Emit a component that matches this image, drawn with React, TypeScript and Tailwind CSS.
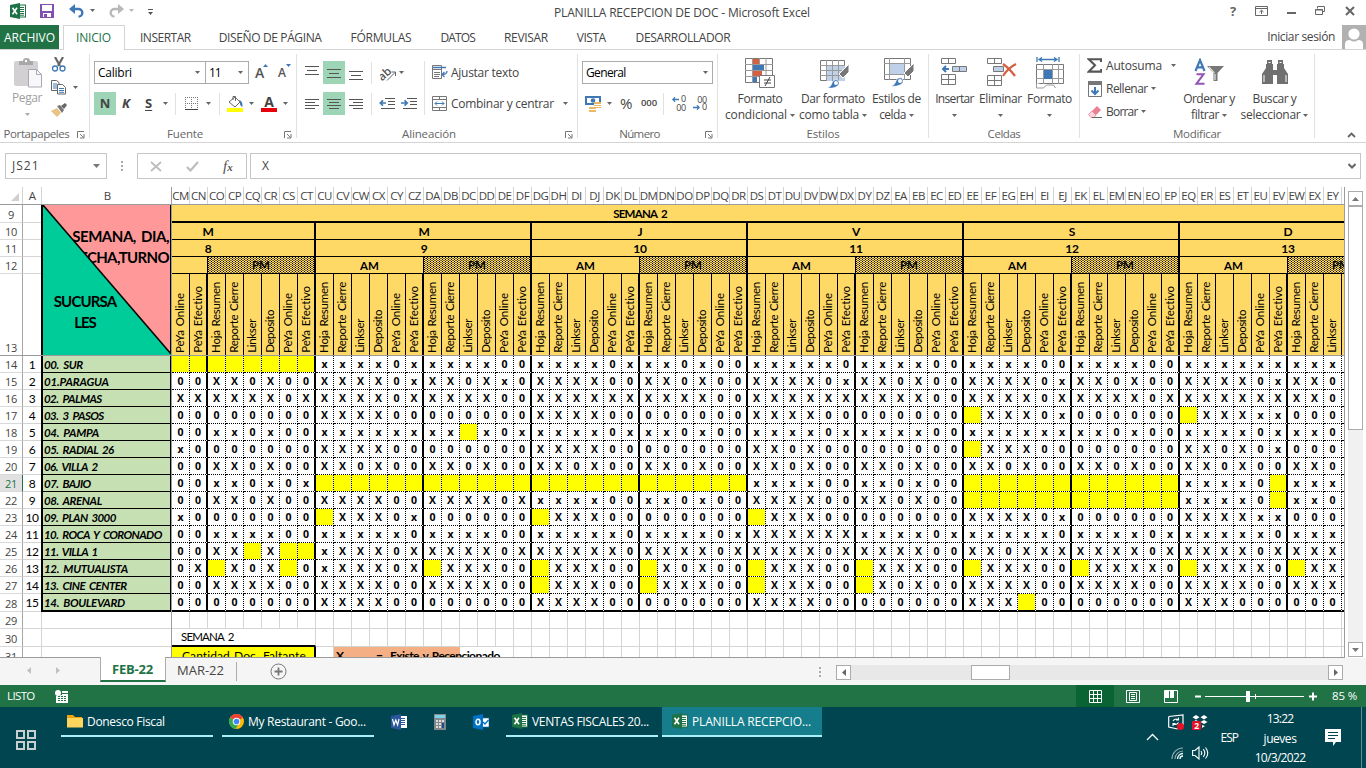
import React, { useLayoutEffect, useRef, useState } from "react";

const UI = "font-['Open_Sans','Noto_Sans',sans-serif]";
const CELL = "font-['Lato','Noto_Sans',sans-serif]";

/* Single line of text tracked so that it takes up exactly w pixels. */
function Fit({ t, w, v = false, className = "" }: { t: string; w: number; v?: boolean; className?: string }) {
  const ref = useRef<HTMLSpanElement>(null);
  const [ls, setLs] = useState(0);
  useLayoutEffect(() => {
    const el = ref.current;
    if (!el) return;
    el.style.letterSpacing = "0px";
    const r = el.getBoundingClientRect();
    setLs((w - (v ? r.height : r.width)) / Math.max(1, t.length - 0.5));
  }, [t, w, v]);
  return (
    <span ref={ref} className={`inline-block shrink-0 whitespace-pre ${className}`} style={{ letterSpacing: `${ls}px` }}>
      {t}
    </span>
  );
}

const Caret = ({ className = "", c = "#666" }: { className?: string; c?: string }) => (
  <svg className={`shrink-0 ${className}`} width="5" height="3" viewBox="0 0 5 3"><path d="M0 0h5L2.5 3z" fill={c} /></svg>
);

const ExcelIcon = () => (
  <svg className="shrink-0" width="16" height="16" viewBox="0 0 16 16">
    <rect x="8" y="2" width="7.5" height="12" fill="#fff" stroke="#1e7145" />
    <path d="M10 4.5h4M10 6.5h4M10 8.5h4M10 10.5h4M10 12.2h4" stroke="#1e7145" />
    <path d="M0 2 10 0v16L0 14z" fill="#1e7145" />
    <path d="M2.5 4.7 7 11.3M7 4.7 2.5 11.3" stroke="#fff" strokeWidth="1.6" />
  </svg>
);

/* ---------- title bar ---------- */
function TitleBar() {
  return (
    <div className="flex h-[25px] shrink-0 items-start bg-white pt-[3px]">
      <div className="ml-[10px]"><ExcelIcon /></div>
      <svg className="ml-[14px] mt-px" width="14" height="14" viewBox="0 0 14 14">
        <path d="M0 0h14v14H0z" fill="#8250b0" /><path d="M2 1h10v6H2z" fill="#fff" /><path d="M3 9h8v4H3z" fill="#fff" /><path d="M4 10h3v3H4z" fill="#8250b0" />
      </svg>
      <svg className="ml-[15px] mt-px" width="15" height="15" viewBox="0 0 15 15">
        <path d="M2 5h7.5a3.8 3.8 0 0 1 0 7.6" fill="none" stroke="#3f78b5" strokeWidth="2.4" /><path d="M6 0 0 5l6 5z" fill="#3f78b5" />
      </svg>
      <Caret className="ml-[6px] mt-[6px]" />
      <svg className="ml-[14px] mt-px" width="15" height="15" viewBox="0 0 15 15">
        <path d="M13 5H5.5a3.8 3.8 0 0 0 0 7.6" fill="none" stroke="#b8b8b8" strokeWidth="2.4" /><path d="M9 0l6 5-6 5z" fill="#b8b8b8" />
      </svg>
      <Caret className="ml-[5px] mt-[6px]" c="#b8b8b8" />
      <svg className="ml-[14px] mt-[6px]" width="5" height="6" viewBox="0 0 5 6"><path d="M0 0h5v1H0zM0 3h5L2.5 6z" fill="#555" /></svg>
      <Fit t="PLANILLA RECEPCION DE DOC - Microsoft Excel" w={256} className="ml-[401px] text-[12px] leading-[20px] text-[#444]" />
      <span className="ml-[420px] text-[13px] font-bold leading-[17px] text-[#666]">?</span>
      <svg className="ml-[19px] mt-[3px]" width="14" height="11" viewBox="0 0 14 11">
        <path d="M.5.5h12v9H.5zM.5 2.5h12M6.5 8V4.5M4.5 6l2-1.8 2 1.8" fill="none" stroke="#666" />
      </svg>
      <svg className="ml-[18px] mt-[9px]" width="9" height="2" viewBox="0 0 9 2"><path d="M0 0h9v2H0z" fill="#666" /></svg>
      <svg className="ml-[19px] mt-[3px]" width="11" height="10" viewBox="0 0 11 10">
        <path d="M2.5 2.5v-2h7v5h-2M.5 3.5h7v5h-7zM0 4h8" fill="none" stroke="#666" />
      </svg>
      <svg className="ml-[19px] mt-[3px]" width="10" height="10" viewBox="0 0 10 10"><path d="M1 1l8 8M9 1L1 9" stroke="#666" strokeWidth="2" /></svg>
    </div>
  );
}

const TABS: { t: string; w: number; m: string }[] = [
  { t: "INSERTAR", w: 51, m: "ml-[15px]" },
  { t: "DISEÑO DE PÁGINA", w: 103, m: "ml-[28px]" },
  { t: "FÓRMULAS", w: 61, m: "ml-[29px]" },
  { t: "DATOS", w: 35, m: "ml-[29px]" },
  { t: "REVISAR", w: 44, m: "ml-[29px]" },
  { t: "VISTA", w: 29, m: "ml-[29px]" },
  { t: "DESARROLLADOR", w: 95, m: "ml-[30px]" },
];

function Tabs() {
  return (
    <div className="flex h-[25px] shrink-0 border-b border-[#d4d4d4] text-[12px] leading-[25px] text-[#444]">
      <div className="flex w-[59px] shrink-0 bg-[#217346] pl-[4px] text-white"><Fit t="ARCHIVO" w={51} /></div>
      <div className="-mb-px ml-[4px] flex w-[62px] shrink-0 border border-b-0 border-[#d4d4d4] bg-white pl-[12px] text-[#217346]">
        <Fit t="INICIO" w={35} className="leading-[24px]" />
      </div>
      {TABS.map((x) => (
        <div key={x.t} className={`flex shrink-0 ${x.m}`}>
          <Fit t={x.t} w={x.w} />
        </div>
      ))}
      <Fit t="Iniciar sesión" w={68} className="ml-auto leading-[24px]" />
      <svg className="ml-[7px] shrink-0" width="24" height="24" viewBox="0 0 24 24">
        <path d="M0 0h24v24H0z" fill="#b1b1b1" /><circle cx="12" cy="9" r="5.6" fill="#fff" /><path d="M3 24v-5q0-4 5-4 4 3 8 0 5 0 5 4v5z" fill="#fff" />
      </svg>
    </div>
  );
}

/* ---------- ribbon ---------- */
function Group({ cls, label, lw, launcher = false, children }: { cls: string; label: string; lw: number; launcher?: boolean; children: React.ReactNode }) {
  return (
    <div className={`flex shrink-0 ${cls}`}>
      <div className="flex min-w-0 grow flex-col">
        <div className="h-[76px] shrink-0">{children}</div>
        <div className="flex h-[16px] items-center text-[11.5px] text-[#666]">
          <div className="flex grow justify-center"><Fit t={label} w={lw} className="leading-[16px]" /></div>
          {launcher && (
            <svg className="mr-[4px] mt-px shrink-0" width="12" height="8" viewBox="0 0 12 8">
              <path d="M4.500 7V.5H11M7 3l3.500 3.500M11 3v4H7" fill="none" stroke="#777" />
            </svg>
          )}
        </div>
      </div>
      <div className="mt-[4px] h-[84px] w-px shrink-0 bg-[#e1e1e1]" />
    </div>
  );
}

const Sep = ({ className = "" }) => <div className={`h-[22px] w-px shrink-0 bg-[#e1e1e1] ${className}`} />;

function Big({ cls, icon, l1, w1, l2 = "", w2 = 0, caret = "#666" }: { cls: string; icon: React.ReactNode; l1: string; w1: number; l2?: string; w2?: number; caret?: string }) {
  return (
    <div className={`flex shrink-0 flex-col items-center ${cls}`}>
      <div className="flex h-[33px] items-start">{icon}</div>
      <Fit t={l1} w={w1} className="leading-[16px]" />
      <div className="flex h-[16px] items-center gap-[3px]">
        {l2 && <Fit t={l2} w={w2} className="leading-[16px]" />}
        <Caret c={caret} />
      </div>
    </div>
  );
}

const Lines = ({ d }: { d: string }) => (
  <svg className="shrink-0" width="14" height="14" viewBox="0 0 14 14"><path d={d} stroke="#555" fill="none" /></svg>
);

function Ribbon() {
  return (
    <div className="flex h-[93px] shrink-0 border-b border-[#d4d4d4] bg-white text-[12px] text-[#444]">
      <Group cls="w-[90px]" label="Portapapeles" lw={66} launcher>
        <div className="flex pt-[7px]">
          <Big
            cls="ml-[10px] w-[34px] text-[#a0a0a0]" l1="Pegar" w1={30} caret="#aaa"
            icon={
              <svg className="ml-[3px] mt-px" width="29" height="30" viewBox="0 0 29 30">
                <rect x="0" y="3" width="24" height="25" rx="2" fill="#d2d0d2" /><path d="M5 7V3h4q0-3 3.500-3T16 3h3v4z" fill="#a8a8a8" /><circle cx="12" cy="3" r="1.200" fill="#fff" />
                <path d="M14.500 11.500h8l5 5v12.500h-13z" fill="#f8f8fb" stroke="#aaa8b5" /><path d="M22.500 11.500v5h5" fill="none" stroke="#aaa8b5" />
              </svg>
            }
          />
          <div className="ml-[7px] flex flex-col">
            <svg width="16" height="15" viewBox="0 0 16 15">
              <path d="M4 0l5 9M12 0L7 9" stroke="#666" strokeWidth="2.200" /><circle cx="4" cy="11.500" r="2.500" fill="#fff" stroke="#3f78b5" strokeWidth="1.300" /><circle cx="11.500" cy="11.500" r="2.500" fill="#fff" stroke="#3f78b5" strokeWidth="1.300" />
            </svg>
            <div className="mt-[8px] flex items-center">
              <svg width="15" height="15" viewBox="0 0 15 15">
                <path d="M.500.500h5l2.500 2v8h-7.500z" fill="#fff" stroke="#666" /><path d="M2 4h4M2 6h4M2 8h4" stroke="#3f78b5" />
                <path d="M6.500 4.500h5l3 3v6.500h-8z" fill="#fff" stroke="#666" /><path d="M8 8.500h5M8 10.500h5M8 12.300h5" stroke="#3f78b5" />
              </svg>
              <Caret className="ml-[7px]" />
            </div>
            <svg className="mt-[8px]" width="16" height="14" viewBox="0 0 16 14">
              <path d="M0 8l6-3 4 5-4 4z" fill="#eac282" /><path d="M6 3l3-1 4 5-2 3z" fill="#777" /><path d="M10 3l4-3 2 2-3 4z" fill="#666" />
            </svg>
          </div>
        </div>
      </Group>

      <Group cls="w-[207px]" label="Fuente" lw={36} launcher>
        <div className="flex h-[34px] items-center pl-[4px] pt-[11px]">
          <div className="flex h-[23px] w-[112px] shrink-0 items-center border border-[#ababab] pl-[3px] text-black"><Fit t="Calibri" w={34} /><Caret className="ml-auto mr-[5px]" /></div>
          <div className="-ml-px flex h-[23px] w-[44px] shrink-0 items-center border border-[#ababab] pl-[3px] text-black"><Fit t="11" w={12} /><Caret className="ml-auto mr-[5px]" /></div>
          <div className="ml-[6px] flex w-[13px] items-start"><span className="text-[14px] font-semibold leading-[25px] text-[#555]">A</span><svg className="-ml-px mt-[4px] shrink-0" width="5" height="3"><path d="M0 3h5L2.500 0z" fill="#3f78b5" /></svg></div>
          <div className="ml-[10px] flex w-[13px] items-start"><span className="text-[12px] font-semibold leading-[26px] text-[#555]">A</span><svg className="mt-[4px] shrink-0" width="5" height="3"><path d="M0 0h5L2.500 3z" fill="#3f78b5" /></svg></div>
        </div>
        <div className="mt-[8px] flex h-[23px] items-center pl-[4px] text-[13px]">
          <div className="flex h-[23px] w-[22px] shrink-0 items-center justify-center bg-[#9fd5b7] font-bold">N</div>
          <span className="ml-[6px] w-[10px] font-bold italic">K</span>
          <span className="ml-[13px] w-[8px] font-bold underline underline-offset-2">S</span>
          <Caret className="ml-[10px]" /><Sep className="ml-[7px]" />
          <svg className="ml-[9px] shrink-0" width="13" height="13" viewBox="0 0 13 13">
            <path d="M0 .5h13M0 6.500h13M.5 0v13M6.500 0v13M12.500 0v13" stroke="#777" strokeDasharray="1 1" /><path d="M0 12.500h13" stroke="#444" />
          </svg>
          <Caret className="ml-[8px]" /><Sep className="ml-[8px]" />
          <svg className="ml-[7px] shrink-0" width="16" height="17" viewBox="0 0 16 17">
            <path d="M2 7l6-5 5 5-5 5z" fill="#fff" stroke="#666" /><path d="M6 5V1.500h2.500V6" fill="none" stroke="#666" /><path d="M12 5q4 1 3.500 7-3-1-2.500-5z" fill="#3f78b5" /><path d="M0 13h16v4H0z" fill="#ff0" />
          </svg>
          <Caret className="ml-[6px]" />
          <div className="ml-[7px] flex w-[16px] shrink-0 flex-col items-center"><span className="h-[13px] text-[14px] font-bold leading-[14px]">A</span><div className="h-[4px] w-[16px] bg-red-600" /></div>
          <Caret className="ml-[6px]" />
        </div>
      </Group>

      <Group cls="w-[281px]" label="Alineación" lw={54} launcher>
        <div className="flex pt-[11px]">
          <div className="flex flex-col gap-[8px] pl-[8px]">
            <div className="flex h-[23px] items-center">
              <Lines d="M0 .5h14M2 4.500h10M0 8.500h14" />
              <div className="mx-[4px] flex h-[23px] w-[22px] items-center justify-center bg-[#9fd5b7]"><Lines d="M0 3.500h14M2 7.500h10M0 11.500h14" /></div>
              <Lines d="M0 5.500h14M2 9.500h10M0 13.500h14" />
              <Sep className="ml-[8px]" />
              <svg className="ml-[8px]" width="17" height="16" viewBox="0 0 17 16">
                <text x="-2" y="12" fontSize="11.500" fontWeight="600" fill="#555" transform="rotate(-42 6 9)" fontFamily="Open Sans">ab</text><path d="M7 15.500l8-8M11.500 7H15.500v4" fill="none" stroke="#666" />
              </svg>
              <Caret className="ml-[2px]" />
            </div>
            <div className="flex h-[23px] items-center">
              <Lines d="M0 2.500h14M0 5.500h10M0 8.500h14M0 11.500h10" />
              <div className="mx-[4px] flex h-[23px] w-[22px] items-center justify-center bg-[#9fd5b7]"><Lines d="M0 2.500h14M2 5.500h10M0 8.500h14M2 11.500h10" /></div>
              <Lines d="M0 2.500h14M4 5.500h10M0 8.500h14M4 11.500h10" />
              <Sep className="ml-[8px]" />
              <svg className="ml-[7px]" width="16" height="12" viewBox="0 0 16 12"><path d="M6 .5h10M9 3.500h7M9 6.500h7M2 10.500h14" stroke="#555" /><path d="M7 5H2M4 2.300L1.300 5 4 7.700" fill="none" stroke="#3f78b5" strokeWidth="1.700" /></svg>
              <svg className="ml-[6px]" width="16" height="12" viewBox="0 0 16 12"><path d="M6 .5h10M9 3.500h7M9 6.500h7M2 10.500h14" stroke="#555" /><path d="M0 5h5M3.500 2.300L6.200 5 3.500 7.700" fill="none" stroke="#3f78b5" strokeWidth="1.700" /></svg>
            </div>
          </div>
          <div className="ml-[7px] h-[54px] w-px shrink-0 bg-[#e1e1e1]" />
          <div className="ml-[7px] flex flex-col gap-[8px]">
            <div className="flex h-[23px] items-center">
              <svg width="16" height="15" viewBox="0 0 16 15">
                <path d="M.500.500h9v13h-9zM.500 4.500h9M2 7.500h6M2 9.500h6M2 11.500h5" fill="none" stroke="#777" /><path d="M1 2.500h13M15 6q0 3.500-5 3.500M12.500 7L10 9.500l2.500 2.500" fill="none" stroke="#3f78b5" strokeWidth="1.300" />
              </svg>
              <Fit t="Ajustar texto" w={68} className="ml-[3px]" />
            </div>
            <div className="flex h-[23px] items-center">
              <svg width="15" height="15" viewBox="0 0 15 15">
                <path d="M.500.500h14v14H.500zM.500 3.500h14M.500 11.500h14M7.500 0v3M7.500 12v3" fill="none" stroke="#777" /><path d="M3 7.500h9M5 5.500l-2 2 2 2M10 5.500l2 2-2 2" fill="none" stroke="#3f78b5" />
              </svg>
              <Fit t="Combinar y centrar" w={103} className="ml-[4px]" /><Caret className="ml-[9px]" />
            </div>
          </div>
        </div>
      </Group>

      <Group cls="w-[140px]" label="Número" lw={41} launcher>
        <div className="flex flex-col gap-[8px] pl-[4px] pt-[11px]">
          <div className="flex h-[23px] w-[131px] items-center border border-[#ababab] pl-[3px] text-black"><Fit t="General" w={40} /><Caret className="ml-auto mr-[4px]" /></div>
          <div className="flex h-[23px] items-center pl-[3px]">
            <svg width="16" height="16" viewBox="0 0 16 16">
              <path d="M0 0h16v9H0z" fill="#3f78b5" /><path d="M2 2h12v5H2z" fill="#fff" /><circle cx="8" cy="4.500" r="2.300" fill="#3f78b5" />
              <path d="M9 6h7v6H9zM4 11h7v5H4z" fill="#eab765" /><path d="M9 8.500h7M9 10.500h7M4 13.500h7" stroke="#fff" />
            </svg>
            <Caret className="ml-[6px]" />
            <span className="ml-[8px] w-[14px] text-[15px]">%</span>
            <Fit t="000" w={16} className="ml-[7px] text-[9.500px] font-semibold" />
            <Sep className="ml-[6px]" />
            <div className="ml-[7px] flex w-[15px] flex-col items-end text-[9px] leading-[8.500px] tracking-[-0.300px]">
              <div className="flex h-[8px] items-center gap-[2px]"><svg width="7" height="5" viewBox="0 0 7 5"><path d="M7 2.500H1M3 .3L.8 2.500 3 4.700" fill="none" stroke="#3f78b5" strokeWidth="1.300" /></svg>0</div><span className="h-[8px]">00</span>
            </div>
            <div className="ml-[7px] flex w-[14px] flex-col items-end text-[9px] leading-[8.500px] tracking-[-0.300px]">
              <span className="h-[8px]">00</span><div className="flex h-[8px] items-center gap-[2px]"><svg width="7" height="5" viewBox="0 0 7 5"><path d="M0 2.500h6M4 .3L6.200 2.500 4 4.700" fill="none" stroke="#3f78b5" strokeWidth="1.300" /></svg>0</div>
            </div>
          </div>
        </div>
      </Group>

      <Group cls="w-[211px]" label="Estilos" lw={33}>
        <div className="flex pl-[4px] pt-[8px]">
          <Big cls="w-[76px]" l1="Formato" w1={45} l2="condicional" w2={62} icon={
            <svg width="30" height="30" viewBox="0 0 30 30">
              <path d="M.500.500h27v24H.500z" fill="#fff" stroke="#777" /><path d="M7.500 0v25M14.500 0v25M21 0v25M0 6.500h28M0 12.500h28M0 18.500h28" stroke="#999" />
              <path d="M8 1h6v5H8zM8 13h9v5H8z" fill="#d65f3f" /><path d="M8 7h11v5H8zM8 19h4v5H8z" fill="#3f78b5" />
              <path d="M14.500 17.500h15v12h-15z" fill="#fff" stroke="#777" /><path d="M19 22h7M19 25h7M25 19l-5 9" stroke="#444" />
            </svg>} />
          <Big cls="w-[70px]" l1="Dar formato" w1={64} l2="como tabla" w2={60} icon={
            <svg className="ml-[4px]" width="30" height="30" viewBox="0 0 30 30">
              <path d="M.500 2.500h24v20H.500z" fill="#fff" stroke="#777" /><path d="M7 8h18v15H7z" fill="#bfd1e8" /><path d="M6.500 2v21M12.500 2v21M18.500 2v21M0 7.500h25M0 12.500h25M0 17.500h25" stroke="#999" />
              <path d="M29 6v8l-6 6-4-4z" fill="#777" stroke="#fff" /><path d="M7 30q4-1 5-5 1-4 6-3 3 5-2 7-4 2-9 1z" fill="#3f78b5" stroke="#fff" strokeWidth=".7" /><circle cx="16" cy="25" r="2" fill="#fff" />
            </svg>} />
          <Big cls="w-[57px]" l1="Estilos de" w1={49} l2="celda" w2={27} icon={
            <svg className="ml-[5px]" width="31" height="30" viewBox="0 0 31 30">
              <path d="M.500.500h26v21H.500z" fill="#fff" stroke="#777" /><path d="M5.500 0v22M20.500 0v22M0 5.500h27M0 16.500h27" stroke="#999" /><path d="M6 6h14v10H6z" fill="#bfd1e8" />
              <path d="M30 5v8l-6 6-4-4z" fill="#777" stroke="#fff" /><path d="M7 28q4-1 5-5 1-4 6-3 3 5-2 7-4 2-9 1z" fill="#3f78b5" stroke="#fff" strokeWidth=".7" /><circle cx="16" cy="23" r="2" fill="#fff" />
            </svg>} />
        </div>
      </Group>

      <Group cls="w-[151px]" label="Celdas" lw={33}>
        <div className="flex pl-[3px] pt-[8px]">
          <Big cls="w-[45px]" l1="Insertar" w1={39} icon={
            <svg width="27" height="28" viewBox="0 0 27 28">
              <path d="M.500.500h14v5H.500zM7.500 0v6M.500 16.500h14v10H.500zM7.500 16v11M0 21.500h15" fill="none" stroke="#777" /><path d="M11.500 8.500h14v5h-14z" fill="#bfd1e8" stroke="#777" /><path d="M18.500 8v6" stroke="#777" />
              <path d="M8 11H2M5 8l-3 3 3 3" fill="none" stroke="#3f78b5" strokeWidth="2" />
            </svg>} />
          <Big cls="w-[47px]" l1="Eliminar" w1={43} icon={
            <svg className="ml-[3px]" width="30" height="28" viewBox="0 0 30 28">
              <path d="M.500.500h14v5H.500zM7.500 0v6M.500 17.500h14v10H.500zM7.500 17v11M0 22.500h15" fill="none" stroke="#777" /><path d="M6.500 8.500h10v5h-10z" fill="#bfd1e8" stroke="#777" />
              <path d="M16 6q6 4 12 12M29 6q-8 4-13 12" fill="none" stroke="#d65f3f" strokeWidth="2.200" />
            </svg>} />
          <Big cls="w-[51px]" l1="Formato" w1={45} icon={
            <svg className="-mt-px ml-px" width="29" height="32" viewBox="0 0 29 32">
              <path d="M1 0v5M23 0v5M3 2.500h18M6 .5L3 2.500l3 2M18 .5l3 2-3 2" fill="none" stroke="#3f78b5" strokeWidth="1.300" />
              <path d="M.500 7.500h27v19H.500z" fill="#fff" stroke="#777" /><path d="M7.500 7v20M16.500 7v20M22.500 7v20M0 12.500h28M0 21.500h28" stroke="#999" /><path d="M8 13h8v9H8z" fill="#3f78b5" />
              <path d="M.500 26v5h7l3-3h7l2 3" fill="#fff" stroke="#999" />
            </svg>} />
        </div>
      </Group>

      <Group cls="w-[235px]" label="Modificar" lw={48}>
        <div className="flex">
          <div className="flex w-[98px] flex-col pl-[7px] pt-[4px]">
            <div className="flex h-[23px] items-center">
              <svg width="15" height="15" viewBox="0 0 15 15"><path d="M14 4V1.200H1.800L8 7.300 1.800 13.600H14.200V11" fill="none" stroke="#555" strokeWidth="2.100" /></svg>
              <Fit t="Autosuma" w={56} className="ml-[4px]" /><Caret className="ml-[9px]" />
            </div>
            <div className="flex h-[23px] items-center">
              <svg className="ml-px" width="14" height="16" viewBox="0 0 14 16"><path d="M.500.500h13v15H.500z" fill="#fff" stroke="#777" /><path d="M0 0h14v4H0z" fill="#777" /><path d="M7 6v7M3.500 9.500L7 13l3.500-3.500" fill="none" stroke="#3f78b5" strokeWidth="2" /></svg>
              <Fit t="Rellenar" w={42} className="ml-[4px]" /><Caret className="ml-[3px]" />
            </div>
            <div className="flex h-[23px] items-center">
              <svg className="ml-px" width="14" height="14" viewBox="0 0 14 14"><path d="M4 6l5-5 4 4-5 5z" fill="#ea8094" /><path d="M4 6l4 4-2 2.500H3L.5 9.500z" fill="#fbd5dc" stroke="#ea8094" strokeWidth=".8" /><path d="M4 12.500h10" stroke="#666" /></svg>
              <Fit t="Borrar" w={32} className="ml-[4px]" /><Caret className="ml-[3px]" />
            </div>
          </div>
          <div className="flex pt-[8px]">
            <Big cls="w-[62px]" l1="Ordenar y" w1={52} l2="filtrar" w2={28} icon={
              <svg width="30" height="30" viewBox="0 0 30 30">
                <path d="M1.500 13L6 2.200 10.500 13M3 9.300h6" fill="none" stroke="#3f78b5" strokeWidth="2.200" /><path d="M2.500 16.300h7L2.500 25.700h8" fill="none" stroke="#9355b5" strokeWidth="2.100" />
                <path d="M13 8h17l-6.500 7v8h-4v-8z" fill="#777" /><path d="M15 9l5.500 6" stroke="#ddd" strokeWidth="1.200" /><path d="M21 16v6" stroke="#fff" />
              </svg>} />
            <Big cls="ml-px w-[67px]" l1="Buscar y" w1={44} l2="seleccionar" w2={60} icon={
              <svg className="mt-[2px]" width="26" height="24" viewBox="0 0 26 24">
                <path d="M5 0h5v4h1v6h4V4h1V0h5v4h1v4l4 6v10H15v-9h-4v9H0V14l4-6V4h1z" fill="#707070" /><path d="M2 15v7M24 15v7M6.500 2.500h2M17.500 2.500h2" stroke="#fff" />
              </svg>} />
          </div>
        </div>
      </Group>
      <svg className="ml-[32px] mt-[82px]" width="9" height="6" viewBox="0 0 9 6"><path d="M1 5l3.500-3.500L8 5" fill="none" stroke="#666" strokeWidth="1.800" /></svg>
    </div>
  );
}

function FormulaBar() {
  return (
    <div className="flex h-[44px] shrink-0 items-start bg-white pt-[10px] text-[12px] text-[#444]">
      <div className="ml-[5px] flex h-[26px] w-[102px] items-center border border-[#c6c6c6] pl-[6px]">
        <Fit t="JS21" w={27} />
        <svg className="ml-auto mr-[6px]" width="7" height="4"><path d="M0 0h7L3.500 4z" fill="#777" /></svg>
      </div>
      <svg className="ml-[14px] mt-[8px]" width="2" height="10"><path d="M0 0h2v2H0zM0 4h2v2H0zM0 8h2v2H0z" fill="#aaa" /></svg>
      <div className="ml-[14px] flex h-[26px] w-[110px] items-center border border-[#c6c6c6] pl-[12px]">
        <svg width="12" height="11" viewBox="0 0 12 11"><path d="M1 1l10 9M11 1L1 10" stroke="#bdbdbd" strokeWidth="1.800" /></svg>
        <svg className="ml-[24px]" width="13" height="11" viewBox="0 0 13 11"><path d="M1 6l3.500 3.500L12 1" fill="none" stroke="#bdbdbd" strokeWidth="2.200" /></svg>
        <span className="ml-[24px] font-['Liberation_Serif',serif] text-[15px] italic leading-none text-[#555]">f<span className="text-[11px] font-bold">x</span></span>
      </div>
      <div className="ml-[3px] flex h-[26px] w-[1111px] items-center border border-[#c6c6c6] pl-[11px]">
        <span>X</span>
        <svg className="ml-auto mr-[4px]" width="8" height="6" viewBox="0 0 8 6"><path d="M.5 1L4 4.500 7.500 1" fill="none" stroke="#666" strokeWidth="2" /></svg>
      </div>
    </div>
  );
}

/* ---------- worksheet ---------- */
/* One string per branch, column CM first; Y marks a missing document (yellow cell). */
const BRANCHES: [string, number, string][] = [
  ["00. SUR", 39, "YY YYYYYY xxxx0x xxxx00 xxxx0x xx0x00 xxxxx0 xxxx00 xxxx00 xxxx00 xxxxxx xxx"],
  ["01.PARAGUA", 65, "00 XX0X00 XXXX0x XX0Xx0 XXXX00 XX0X00 XXXX0x XX0X00 XXXX0x XX0X00 XXXX0x XX0"],
  ["02. PALMAS", 58, "XX XXXX0X XXXX0X XXXX00 XXXXXX XXXX00 XXXXXX XXXX00 XXXX0X XXXX0X XXXXXX XX0"],
  ["03. 3 PASOS", 60, "00 000000 XXXX00 000000 XXXX00 000000 XXXX00 000000 YXXX0x 000000 YXXXxx 000"],
  ["04. PAMPA", 55, "00 xx0x00 xxxxxx xxYx0x xxxx0x xx0x00 xxxx0x xxxx00 xxxxxx xx0x00 xxxx0x xx0"],
  ["05. RADIAL 26", 70, "x0 000000 XXXX00 000000 XXXX00 000000 XX0X00 000000 YXXX00 000000 XX0X0x 000"],
  ["06. VILLA 2", 54, "00 XX0X00 XX0X00 XX0X00 XX0X00 XX0X00 XX0X00 XX0X00 XX0X00 XX0X00 XX0X00 XX0"],
  ["07. BAJIO", 47, "00 xx0x0x YYYYYY YYYYYY YYYYYY YYYYYY xxxx00 xx0x00 YYYYYY YYYYYY xxxx0Y xxx"],
  ["08. ARENAL", 58, "00 XX0X00 XXXX00 XXXX0X xxxx00 xx0x00 XXXX00 XX0X00 YYYYYY YYYYYY xxxx0Y xx0"],
  ["09. PLAN 3000", 72, "x0 000000 YXXX0x 000000 YXXX00 000000 YXXX00 000000 XXXX0x 000000 XXXXxx 000"],
  ["10. ROCA Y CORONADO", 118, "00 xxxx00 xxxxx0 xxxx00 xxxxx0 xxxx0x XXXXXX xxxx0x xxxxx0 xxxx0x xxxxx0 xxx"],
  ["11. VILLA 1", 54, "00 XXYXYY xXXX0X XXXX0X XXXXX0 XXXX0X XXXX0X XXXX00 XX0XXX XXXX0X XXXX0X XXX"],
  ["12. MUTUALISTA", 84, "0X YX0XY0 xXXX0X YXXX00 YXXX00 YX0X00 YXXX00 YXXX00 YXXX00 YXXXX0 YXXXX0 YXX"],
  ["13. CINE CENTER", 83, "00 XXXX00 XXXX00 XXXX00 YXXX00 YXXX00 YXXX00 YX0X00 XXXX00 XXXX00 XXXX00 XXX"],
  ["14. BOULEVARD", 81, "00 000000 XXXX00 000000 XXXX00 000000 XXXX00 000000 XXXY00 000000 XXX000 000"],
];

const LETTERS = "ABCDEFGHIJKLMNOPQRSTUVWXYZ";
const COLS: string[] = [];
for (let n = 12; COLS.length < 65; n++) COLS.push("CDE"[Math.floor(n / 26)] + LETTERS[n % 26]);

const DOCS: [string, number][] = [["Hoja Resumen", 71], ["Reporte Cierre", 71], ["Linkser", 34], ["Deposito", 43], ["PeYa Online", 60], ["PeYa Efectivo", 67]];
const DAYS: [string, string][] = [["M", "8"], ["M", "9"], ["J", "10"], ["V", "11"], ["S", "12"], ["D", "13"]];
const isShiftEnd = (i: number) => i % 6 === 1;

function RowHead({ n, cls, sel = false }: { n: number; cls: string; sel?: boolean }) {
  return (
    <div className={`flex w-[23px] shrink-0 items-end justify-center overflow-hidden border-b border-r text-[11px] leading-[15px] tracking-[-0.200px] ${cls} ${sel ? "border-b-[#d9d9d9] border-r-[#217346] bg-[#e1e1e1] text-[#217346]" : "border-b-[#d9d9d9] border-r-[#a6a6a6] text-[#444]"} ${UI}`}>
      {n}
    </div>
  );
}

function Frozen() {
  return (
    <div className="flex w-[172px] shrink-0 flex-col border-r border-[#9b9b9b]">
      <div className="flex shrink-0 border-b border-[#9b9b9b]">
        <div className="flex flex-col">
          <RowHead n={9} cls="h-[18px]" /><RowHead n={10} cls="h-[17px]" /><RowHead n={11} cls="h-[17px]" /><RowHead n={12} cls="h-[17px]" /><RowHead n={13} cls="h-[81px] border-b-0" />
        </div>
        <div className="flex w-[18px] flex-col">
          <div className="h-[18px] border-b border-[#d4d4d4]" /><div className="h-[17px] border-b border-[#d4d4d4]" /><div className="h-[17px] border-b border-[#d4d4d4]" /><div className="h-[17px] border-b border-[#d4d4d4]" />
        </div>
        <div className="relative h-[150px] w-[130px] border-l-2 border-r border-black bg-[#ff9999] text-[15px] font-bold text-black">
          <div className="flex flex-col items-end pr-px pt-[21px] leading-[21px]">
            <Fit t="SEMANA, DIA," w={97} className="[word-spacing:2px]" /><Fit t="FECHA,TURNO" w={98} />
          </div>
          <svg className="absolute left-0 top-0" width="128" height="150" viewBox="0 0 128 150"><path d="M0 0L128 149V150H0z" fill="#00cc99" /><path d="M0 0L128 149" stroke="#000" strokeWidth="1.500" /></svg>
          <div className="absolute left-[10px] top-[86px] flex w-[64px] flex-col items-center leading-[21px]">
            <Fit t="SUCURSA" w={63} /><Fit t="LES" w={22} />
          </div>
        </div>
      </div>
      {BRANCHES.map(([name, w], i) => (
        <div key={name} className="flex shrink-0">
          <RowHead n={14 + i} cls={i === 14 ? "h-[18px]" : "h-[17px]"} sel={i === 7} />
          <div className={`flex w-[18px] items-center justify-center border-b border-[#d4d4d4] pt-px text-[12px] leading-none tracking-[-0.400px] text-black ${i === 14 ? "h-[18px]" : "h-[17px]"}`}>{i + 1}</div>
          <div className={`flex w-[130px] items-center border-b border-l-2 border-r border-black bg-[#c6e0b4] pt-px text-[11.500px] font-bold italic leading-none text-black ${i === 14 ? "h-[18px] border-b-2" : "h-[17px]"}`}>
            <Fit t={name} w={w} className="ml-px [word-spacing:2px]" />
          </div>
        </div>
      ))}
      {[29, 30, 31].map((n) => (
        <div key={n} className="flex shrink-0">
          <RowHead n={n} cls={n === 29 ? "h-[17px]" : "h-[18px]"} />
          <div className={`w-[19px] border-b border-r border-[#d4d4d4] ${n === 29 ? "h-[17px]" : "h-[18px]"}`} />
          <div className="w-[129px] border-b border-[#d4d4d4]" />
        </div>
      ))}
    </div>
  );
}

function Plain({ n, cls }: { n: number; cls: string }) {
  return <>{Array.from({ length: n }, (_, i) => <div key={i} className={`w-[18px] shrink-0 border-b border-r border-[#d4d4d4] ${cls}`} />)}</>;
}

function Cells() {
  return (
    <div className="flex w-[1172px] shrink-0 flex-col overflow-hidden text-black">
      <div className="flex h-[18px] shrink-0 items-center justify-center border-b-2 border-black bg-[#ffd966] pr-[236px] pt-px text-[11.500px] font-bold"><Fit t="SEMANA 2" w={54} className="[word-spacing:2px]" /></div>
      {[0, 1].map((k) => (
        <div key={k} className="-ml-[72px] flex h-[17px] shrink-0 bg-[#ffd966]">
          {DAYS.map((d) => (
            <div key={d[1]} className="flex w-[216px] shrink-0 items-center justify-center border-b border-r-2 border-black pl-[2px] pt-px text-[12px] font-bold leading-none tracking-[-0.300px]">{d[k]}</div>
          ))}
        </div>
      ))}
      <div className="-ml-[72px] flex h-[17px] shrink-0 bg-[#ffd966] text-[11.500px] font-bold leading-none">
        {DAYS.map((d) => (
          <React.Fragment key={d[1]}>
            <div className="flex w-[108px] shrink-0 items-center justify-center border-b border-r border-black pt-px">AM</div>
            <div className="flex w-[108px] shrink-0 items-center justify-center border-b border-r-2 border-black bg-[linear-gradient(#000,#000),linear-gradient(#000,#000)] bg-[length:1px_1px,1px_1px] bg-no-repeat pt-px [background-image:linear-gradient(#000,#000),linear-gradient(#000,#000)] [background-position:0_0,2px_1px] [background-repeat:no-repeat]">
              <div className="-mt-px flex h-[16px] w-[106px] items-center justify-center bg-[radial-gradient(circle_at_0.5px_0.5px,#000_0.6px,transparent_0.7px),radial-gradient(circle_at_0.5px_0.5px,#000_0.6px,transparent_0.7px)] bg-[length:3px_2px] [background-position:0_0,1.5px_1px]">PM</div>
            </div>
          </React.Fragment>
        ))}
      </div>
      <div className="flex h-[82px] shrink-0 border-b border-[#9b9b9b] bg-[#ffd966]">
        {COLS.map((c, i) => {
          const [t, w] = DOCS[(i + 4) % 6];
          return (
            <div key={c} className={`flex w-[18px] shrink-0 items-end justify-center border-black pb-[2px] pr-px text-[11.500px] ${isShiftEnd(i) ? "border-r-2" : "border-r"}`}>
              <Fit t={t} w={w} v className="rotate-180 leading-[16px] [font-kerning:none] [word-spacing:1px] [writing-mode:vertical-rl]" />
            </div>
          );
        })}
      </div>
      {BRANCHES.map(([name, , data], r) => (
        <div key={name} className={`flex shrink-0 text-[10.500px] font-bold leading-none ${UI}`}>
          {[...data.replace(/ /g, ""), " "].map((v, i) => (
            <div
              key={i}
              className={`flex w-[18px] shrink-0 items-center justify-center border-black bg-clip-padding pt-px ${r === 14 ? "h-[18px] border-b-2" : "h-[17px] border-b [border-bottom-style:dotted]"} ${isShiftEnd(i) ? "border-r-2" : "border-r [border-right-style:dotted]"} ${v === "Y" ? "bg-[#ffff00]" : "bg-white"}`}
            >
              {v === "Y" ? "" : v}
            </div>
          ))}
        </div>
      ))}
      <div className="flex h-[17px] shrink-0"><Plain n={66} cls="h-[17px]" /></div>
      <div className="flex h-[18px] shrink-0">
        <div className="flex w-[144px] shrink-0 items-center border-b-2 border-r border-b-black border-r-[#d4d4d4] pl-[9px] text-[11.500px] leading-none"><Fit t="SEMANA 2" w={53} className="[word-spacing:2px]" /></div>
        <Plain n={58} cls="h-[18px]" />
      </div>
      <div className="flex h-[18px] shrink-0 text-[12px] leading-[18px]">
        <div className="flex w-[144px] shrink-0 border-r-2 border-black bg-[#ffff00] pl-[10px]"><Fit t="Cantidad Doc. Faltante" w={124} className="[word-spacing:1px]" /></div>
        <Plain n={1} cls="h-[18px]" />
        <div className="flex w-[126px] shrink-0 bg-[#f4b084] pl-[2px] font-bold">
          <Fit t="X" w={7} /><Fit t="=" w={6} className="ml-[33px]" /><Fit t="Existe y Recepcionado" w={110} className="ml-[8px] [word-spacing:1.500px]" />
        </div>
        <div className="w-[54px] shrink-0 border-r border-[#d4d4d4]" />
        <Plain n={47} cls="h-[18px]" />
      </div>
    </div>
  );
}

function Sheet() {
  return (
    <div className="flex h-[471px] shrink-0 bg-white">
      <div className={`flex w-[1345px] shrink-0 flex-col overflow-hidden border-b border-r border-[#9b9b9b] ${CELL}`}>
        <div className={`flex h-[18px] shrink-0 border-b border-[#9b9b9b] text-[11.500px] leading-[18px] text-[#444] ${UI}`}>
          <div className="flex w-[23px] shrink-0 items-end justify-end border-r border-[#d4d4d4] pb-[3px] pr-[3px]"><svg width="8" height="8"><path d="M8 0v8H0z" fill="#d0d0d0" /></svg></div>
          <div className="w-[19px] shrink-0 border-r border-[#d4d4d4] pl-px text-center">A</div>
          <div className="w-[130px] shrink-0 border-r border-[#9b9b9b] pl-[2px] text-center">B</div>
          {COLS.map((c) => (
            <div key={c} className="flex w-[18px] shrink-0 justify-center border-r border-[#d4d4d4] tracking-[-0.500px]">{c}</div>
          ))}
        </div>
        <div className="flex min-h-0 grow overflow-hidden">
          <Frozen />
          <Cells />
        </div>
      </div>
      <div className="ml-[3px] mt-[4px] flex h-[466px] w-[15px] flex-col bg-[#f1f1f1]">
        <div className="flex h-[15px] shrink-0 items-center justify-center border border-[#ababab] bg-white"><svg width="7" height="4"><path d="M0 4h7L3.500 0z" fill="#777" /></svg></div>
        <div className="h-[224px] shrink-0 border border-[#ababab] bg-white" />
        <div className="mt-auto flex h-[15px] shrink-0 items-center justify-center border border-[#ababab] bg-white"><svg width="7" height="4"><path d="M0 0h7L3.500 4z" fill="#777" /></svg></div>
      </div>
    </div>
  );
}

function SheetTabs() {
  return (
    <div className="flex h-[27px] shrink-0 bg-[#f5f5f5] text-[13px] text-[#444]">
      <svg className="ml-[27px] mt-[9px]" width="4" height="7"><path d="M4 0v7L0 3.500z" fill="#c0c0c0" /></svg>
      <svg className="ml-[25px] mt-[9px]" width="4" height="7"><path d="M0 0v7l4-3.500z" fill="#c0c0c0" /></svg>
      <div className="-mt-px ml-[40px] flex h-[25px] w-[66px] shrink-0 justify-center border-x border-b-2 border-x-[#ababab] border-b-[#217346] bg-white pr-px font-bold leading-[25px] text-[#217346]"><Fit t="FEB-22" w={41} /></div>
      <Fit t="MAR-22" w={47} className="ml-[11px] leading-[25px]" />
      <div className="ml-[12px] mt-[4px] h-[19px] w-px bg-[#ababab]" />
      <svg className="ml-[33px] mt-[5px]" width="17" height="17" viewBox="0 0 17 17"><circle cx="8.500" cy="8.500" r="7.500" fill="none" stroke="#777" /><path d="M8.500 4.500v8M4.500 8.500h8" stroke="#777" strokeWidth="1.800" /></svg>
      <svg className="ml-auto mt-[9px]" width="2" height="10"><path d="M0 0h2v2H0zM0 4h2v2H0zM0 8h2v2H0z" fill="#aaa" /></svg>
      <div className="ml-[15px] mr-[23px] mt-[7px] flex h-[15px] w-[507px] shrink-0 bg-[#e8e8e8]">
        <div className="flex w-[15px] items-center justify-center border border-[#ababab] bg-white"><svg width="4" height="7"><path d="M4 0v7L0 3.500z" fill="#666" /></svg></div>
        <div className="ml-[120px] w-[39px] border border-[#ababab] bg-white" />
        <div className="ml-auto flex w-[15px] items-center justify-center border border-[#ababab] bg-white"><svg width="4" height="7"><path d="M0 0v7l4-3.500z" fill="#666" /></svg></div>
      </div>
    </div>
  );
}

function StatusBar() {
  return (
    <div className="flex h-[22px] shrink-0 items-center bg-[#217346] text-[11.500px] text-white">
      <Fit t="LISTO" w={28} className="ml-[7px]" />
      <svg className="ml-[20px]" width="13" height="13" viewBox="0 0 13 13"><circle cx="3" cy="3" r="3" fill="#fff" /><path d="M7 1h6v2H7zM1 6v7h12V4H7v1" fill="#fff" /><path d="M3 6.500h2M6 6.500h2M9 6.500h2M3 8.500h2M6 8.500h2M9 8.500h2M3 10.500h2M6 10.500h2M9 10.500h2" stroke="#217346" /></svg>
      <div className="ml-auto flex h-[22px] w-[38px] items-center justify-center bg-[#0a6332]">
        <svg width="13" height="13" viewBox="0 0 13 13"><path d="M.500.500h12v12H.500zM4.500 0v13M8.500 0v13M0 4.500h13M0 8.500h13" fill="none" stroke="#fff" /></svg>
      </div>
      <svg className="ml-[12px]" width="14" height="13" viewBox="0 0 14 13"><path d="M.500.500h13v12H.500zM3.500 2.500h7v8h-7zM5 4.500h4M5 6.500h4M5 8.500h4" fill="none" stroke="#fff" /></svg>
      <svg className="ml-[24px]" width="14" height="13" viewBox="0 0 14 13"><path d="M.500.500h13v12H.500z" fill="none" stroke="#fff" /><path d="M1 1h4v7H1zM6 1h4v7H6z" fill="#fff" /></svg>
      <svg className="ml-[17px]" width="122" height="11" viewBox="0 0 122 11"><path d="M0 4.500h6v2H0zM10 5h99v1H10zM51 0h4v11h-4zM60 3h1v5h-1zM114 4.500h8v2h-8zM117 1.500h2v8h-2z" fill="#fff" /></svg>
      <Fit t="85 %" w={25} className="ml-[15px] mr-[9px]" />
    </div>
  );
}

/* ---------- windows taskbar ---------- */
function TaskItem({ cls, t, w, icon }: { cls: string; t: string; w: number; icon: React.ReactNode }) {
  return (
    <div className={`flex h-[30px] shrink-0 items-center gap-[4px] border-b-2 border-[#a8f0fa] ${cls}`}>
      {icon}<Fit t={t} w={w} className="pt-px" />
    </div>
  );
}

function Taskbar() {
  return (
    <div className="flex h-[61px] shrink-0 bg-[#00454f] text-[12px] text-white">
      <svg className="ml-[16px] mt-[23px]" width="20" height="20" viewBox="0 0 20 20"><path d="M1 1h7v7H1zM12 1h7v7h-7zM1 12h7v7H1zM12 12h7v7h-7z" fill="none" stroke="#c8cfd1" strokeWidth="2" /></svg>
      <TaskItem cls="ml-[25px] w-[152px] pl-[6px]" t="Donesco Fiscal" w={78} icon={
        <svg width="16" height="14" viewBox="0 0 16 14"><path d="M0 1h6l2 2h7v4H0z" fill="#f0a30a" /><path d="M0 4h16v9.500H0z" fill="#ffd55e" /></svg>} />
      <TaskItem cls="ml-[9px] w-[152px] pl-[7px]" t="My Restaurant - Goo..." w={118} icon={
        <svg width="15" height="15" viewBox="0 0 16 16"><circle cx="8" cy="8" r="8" fill="#fbbc05" /><path d="M8 8L1.070 4A8 8 0 0 1 14.930 4z" fill="#ea4335" /><path d="M8 8L1.070 4A8 8 0 0 0 7 15.900L10 11z" fill="#34a853" /><circle cx="8" cy="8" r="4" fill="#fff" /><circle cx="8" cy="8" r="3" fill="#4285f4" /></svg>} />
      <svg className="ml-[17px] mt-[7px]" width="16" height="16" viewBox="0 0 16 16"><path d="M8 2h8v12H8z" fill="#fff" /><path d="M10 4.500h4M10 6.500h4M10 8.500h4M10 10.500h4" stroke="#2b579a" /><path d="M0 2L10 0v16L0 14z" fill="#2b579a" /><path d="M1.500 5l1.500 6 1.800-5 1.800 5L8 5" fill="none" stroke="#fff" strokeWidth="1.200" /></svg>
      <svg className="ml-[27px] mt-[7px]" width="12" height="16" viewBox="0 0 12 16"><path d="M0 0h12v16H0z" fill="#80888c" /><path d="M1 1h10v3H1z" fill="#7fd4ea" /><path d="M2 6h2v2H2zM5 6h2v2H5zM8 6h2v2H8zM2 9h2v2H2zM5 9h2v2H5zM2 12h2v2H2zM5 12h2v2H5z" fill="#ddd" /><path d="M8 9h2v5H8z" fill="#1f4e8c" /></svg>
      <svg className="ml-[27px] mt-[7px]" width="16" height="16" viewBox="0 0 16 16"><path d="M8 4h8v9H8z" fill="#fff" stroke="#0072c6" strokeWidth=".6" /><path d="M10 8l2 2 3.500-4" fill="none" stroke="#0072c6" strokeWidth="1.300" /><path d="M0 2L10 0v16L0 14z" fill="#0072c6" /><ellipse cx="5" cy="8" rx="2" ry="2.700" fill="none" stroke="#fff" strokeWidth="1.500" /></svg>
      <TaskItem cls="ml-[17px] w-[152px] pl-[6px]" t="VENTAS FISCALES 20..." w={117} icon={<ExcelIcon />} />
      <TaskItem cls="ml-[4px] w-[160px] bg-[#157d8b] pl-[10px]" t="PLANILLA RECEPCIO..." w={119} icon={<ExcelIcon />} />
      <svg className="ml-auto mt-[26px]" width="13" height="8" viewBox="0 0 13 8"><path d="M1 7l5.500-5.500L12 7" fill="none" stroke="#fff" strokeWidth="1.300" /></svg>
      <div className="ml-[9px] mt-[7px] flex w-[16px] flex-col">
        <svg width="17" height="17" viewBox="0 0 17 17"><path d="M.7 2.500L15 1v10M.7 2.500V13l9 2" fill="none" stroke="#fff" strokeWidth="1.200" /><path d="M5 7q2-3 5-1.500M10.500 3.500v2.500H8M10.500 8.500q-2 3-5 1.500M5 12V9.500h2.500" fill="none" stroke="#fff" strokeWidth="1.100" /><circle cx="12.500" cy="12.500" r="3.500" fill="#e81123" /></svg>
        <svg className="ml-[3px] mt-[16px]" width="13" height="13" viewBox="0 0 13 13"><path d="M1 12A11 11 0 0 1 12 1M4 12a8 8 0 0 1 8-8" fill="none" stroke="#8fa9ad" strokeWidth="1.100" /><path d="M6.500 12A5.500 5.500 0 0 1 12 6.500M9 12a3 3 0 0 1 3-3" fill="none" stroke="#fff" strokeWidth="1.300" /></svg>
      </div>
      <div className="ml-[8px] mt-[7px] flex w-[17px] flex-col">
        <svg width="16" height="17" viewBox="0 0 16 17"><path d="M4 1l3.500 2.300L4 5.600.5 3.300zM12 1l3.500 2.300L12 5.600 8.500 3.300zM4 6l3.500 2L4 10 .5 8zM12 6l3.500 2L12 10 8.500 8zM10 11l3 1-3 2z" fill="#fff" /><rect x="0" y="7" width="9" height="9" rx="1" fill="#e0132a" /><text x="2.200" y="14.500" fontSize="8.500" fontWeight="700" fontFamily="Open Sans" fill="#fff">2</text></svg>
        <svg className="mt-[15px]" width="17" height="14" viewBox="0 0 17 14"><path d="M.6 4.500H3L7 1v12L3 9.500H.6z" fill="none" stroke="#fff" strokeWidth="1.100" /><path d="M9 5q1.500 2 0 4M11.300 3.200q3 3.800 0 7.600M13.500 1.500q4.500 5.500 0 11" fill="none" stroke="#fff" strokeWidth="1.100" /></svg>
      </div>
      <Fit t="ESP" w={18} className="ml-[11px] mt-[22px] leading-[18px]" />
      <div className="ml-[15px] mt-[2px] flex w-[54px] flex-col items-center leading-[19.500px]">
        <Fit t="13:22" w={27} /><Fit t="jueves" w={33} /><Fit t="10/3/2022" w={51} />
      </div>
      <svg className="ml-[18px] mr-[20px] mt-[22px]" width="16" height="17" viewBox="0 0 16 17"><path d="M0 0h16v13h-5l-3 4v-4H0z" fill="#fff" /><path d="M3 3.500h10M3 6.500h10M3 9.500h7" stroke="#00454f" /></svg>
      <div className="mr-[4px] w-px bg-[#5f8a90]" />
    </div>
  );
}

export default function App() {
  return (
    <div className={`flex h-[768px] w-[1366px] flex-col overflow-hidden bg-white ${UI}`}>
      <TitleBar />
      <Tabs />
      <Ribbon />
      <FormulaBar />
      <Sheet />
      <SheetTabs />
      <StatusBar />
      <Taskbar />
    </div>
  );
}
